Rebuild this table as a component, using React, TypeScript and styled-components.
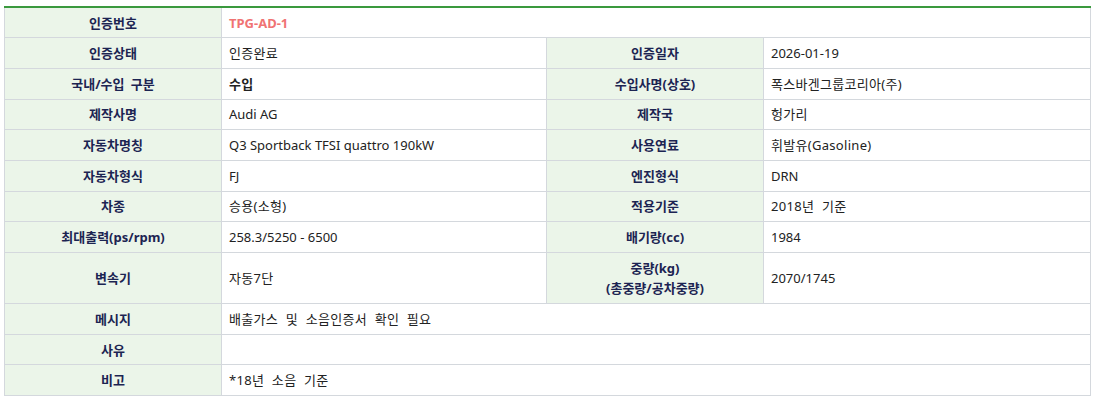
import React from 'react';
import styled, { createGlobalStyle } from 'styled-components';

const GlobalStyle = createGlobalStyle`
  html, body {
    margin: 0;
    padding: 0;
    background: #fff;
  }
  body {
    font-family: "Noto Sans", "Noto Sans CJK KR", sans-serif;
    font-size: 13px;
    color: #222;
  }
`;

const Wrapper = styled.div`
  padding: 6px 3px 0 4px;
`;

const Table = styled.table`
  width: 1086px;
  border-collapse: collapse;
  table-layout: fixed;
  border-top: 2px solid #3a993e;
`;

const Row = styled.tr<{ $tall?: boolean }>`
  height: ${p => (p.$tall ? '51px' : '30.7px')};
`;

const Label = styled.th<{ $ko?: boolean }>`
  background: #ebf5e9;
  border: 1px solid #d4d8dd;
  color: #1c2452;
  font-weight: 700;
  text-align: center;
  padding: 0 8px;
  line-height: 20px;
  word-spacing: ${p => (p.$ko ? '3px' : 'normal')};
`;

const Value = styled.td<{ $accent?: boolean; $bold?: boolean; $ko?: boolean }>`
  border: 1px solid #d4d8dd;
  padding: 0 7px;
  line-height: 20px;
  word-spacing: ${p => (p.$ko ? '4px' : 'normal')};
  letter-spacing: ${p => (p.$ko ? '0.3px' : 'normal')};
  color: ${p => (p.$accent ? '#f07373' : '#222')};
  font-weight: ${p => (p.$accent || p.$bold ? 700 : 400)};
  text-align: left;
`;

// 한글이 섞인 문구는 공백 간격을 조금 넓게
const hasKo = (s: string) => /[가-힣]/.test(s);

type Pair = { label: React.ReactNode; value: string; bold?: boolean };

const rows: Pair[][] = [
  [{ label: '인증상태', value: '인증완료' }, { label: '인증일자', value: '2026-01-19' }],
  [{ label: '국내/수입 구분', value: '수입', bold: true }, { label: '수입사명(상호)', value: '폭스바겐그룹코리아(주)' }],
  [{ label: '제작사명', value: 'Audi AG' }, { label: '제작국', value: '헝가리' }],
  [{ label: '자동차명칭', value: 'Q3 Sportback TFSI quattro 190kW' }, { label: '사용연료', value: '휘발유(Gasoline)' }],
  [{ label: '자동차형식', value: 'FJ' }, { label: '엔진형식', value: 'DRN' }],
  [{ label: '차종', value: '승용(소형)' }, { label: '적용기준', value: '2018년 기준' }],
  [{ label: '최대출력(ps/rpm)', value: '258.3/5250 - 6500' }, { label: '배기량(cc)', value: '1984' }],
  [
    { label: '변속기', value: '자동7단' },
    { label: <>중량(kg)<br />(총중량/공차중량)</>, value: '2070/1745' },
  ],
];

const wideRows = [
  { label: '메시지', value: '배출가스 및 소음인증서 확인 필요' },
  { label: '사유', value: '' },
  { label: '비고', value: '*18년 소음 기준' },
];

export default function App() {
  return (
    <Wrapper>
      <GlobalStyle />
      <Table>
        <colgroup>
          <col style={{ width: 217 }} />
          <col style={{ width: 325 }} />
          <col style={{ width: 217 }} />
          <col style={{ width: 327 }} />
        </colgroup>
        <tbody>
          <Row>
            <Label>인증번호</Label>
            <Value $accent colSpan={3}>TPG-AD-1</Value>
          </Row>
          {rows.map((r, i) => (
            <Row key={i} $tall={i === rows.length - 1}>
              {r.map((c, j) => (
                <React.Fragment key={j}>
                  <Label $ko={typeof c.label === 'string' && c.label.includes(' ')}>{c.label}</Label>
                  <Value $bold={c.bold} $ko={hasKo(c.value)}>{c.value}</Value>
                </React.Fragment>
              ))}
            </Row>
          ))}
          {wideRows.map(r => (
            <Row key={r.label}>
              <Label>{r.label}</Label>
              <Value colSpan={3} $ko={hasKo(r.value)}>{r.value}</Value>
            </Row>
          ))}
        </tbody>
      </Table>
    </Wrapper>
  );
}
